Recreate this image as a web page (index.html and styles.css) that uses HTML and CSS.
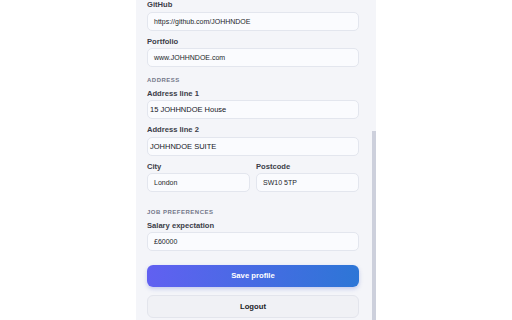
FILE: index.html
```html
<!DOCTYPE html>
<html lang="en">
<head>
  <meta charset="UTF-8">
  <meta name="viewport" content="width=device-width, initial-scale=1.0">
  <title>Profile</title>
  <link rel="stylesheet" href="styles.css">
</head>
<body>

  <!-- Profile panel -->
  <div class="panel">
    <div class="field first">
      <label class="label">GitHub</label>
      <div class="input">https://github.com/JOHHNDOE</div>
    </div>
    <div class="field">
      <label class="label">Portfolio</label>
      <div class="input">www.JOHHNDOE.com</div>
    </div>

    <div class="section-title">ADDRESS</div>
    <div class="field first">
      <label class="label">Address line 1</label>
      <div class="input filled">15 JOHHNDOE House</div>
    </div>
    <div class="field">
      <label class="label">Address line 2</label>
      <div class="input filled">JOHHNDOE SUITE</div>
    </div>
    <div class="row">
      <div class="field">
        <label class="label">City</label>
        <div class="input">London</div>
      </div>
      <div class="field">
        <label class="label">Postcode</label>
        <div class="input">SW10 5TP</div>
      </div>
    </div>

    <div class="section-title job">JOB PREFERENCES</div>
    <div class="field first">
      <label class="label">Salary expectation</label>
      <div class="input">£60000</div>
    </div>

    <button class="btn save">Save profile</button>
    <button class="btn logout">Logout</button>

    <div class="scroll-thumb"></div>
  </div>

</body>
</html>
```

FILE: styles.css
```css
* {
  box-sizing: border-box;
  margin: 0;
  padding: 0;
}
body {
  font-family: "Liberation Sans", Arial, sans-serif;
  background: #fff;
  width: 512px;
  height: 320px;
  overflow: hidden;
}
.panel {
  position: relative;
  width: 240px;
  height: 320px;
  margin-left: 136px;
  padding: 0 17px 0 11px;
  background: #f4f5f9;
  overflow: hidden;
  display: flex;
  flex-direction: column;
}
.field {
  display: flex;
  flex-direction: column;
  margin-top: 6px;
}
.field.first {
  margin-top: 0;
}
.label {
  font-size: 7.6px;
  line-height: 10px;
  font-weight: 700;
  color: #3b3d48;
  margin-bottom: 1.5px;
}
.input {
  height: 19px;
  line-height: 17px;
  padding: 0 6px;
  font-size: 7px;
  color: #1d1f2b;
  background: #fafbfe;
  border: 1px solid #e3e6ee;
  border-radius: 5px;
}
.input.filled {
  padding-left: 2px;
  font-size: 7.5px;
  color: #15161f;
}
.row {
  display: flex;
  gap: 6px;
}
.row .field {
  flex: 1;
}
.section-title {
  margin-top: 8.5px;
  margin-bottom: 4px;
  font-size: 6px;
  line-height: 9px;
  font-weight: 700;
  letter-spacing: 0.5px;
  color: #737789;
}
.section-title.job {
  margin-top: 15.5px;
}
.btn {
  font-family: "Liberation Sans", Arial, sans-serif;
  font-size: 7.7px;
  font-weight: 700;
  border-radius: 6px;
  cursor: pointer;
}
.save {
  margin-top: 14px;
  height: 21.5px;
  color: #fff;
  border: none;
  background: linear-gradient(90deg, #6160f1 0%, #2d76d6 100%);
  box-shadow: 0 2px 4px rgba(60, 80, 200, 0.25);
}
.logout {
  margin-top: 8.5px;
  height: 22.5px;
  color: #1c1d28;
  background: #f0f1f5;
  border: 1px solid #e3e5ec;
}
.scroll-thumb {
  position: absolute;
  right: 0;
  top: 131px;
  width: 4px;
  height: 189px;
  background: #cdd0dc;
}
```
